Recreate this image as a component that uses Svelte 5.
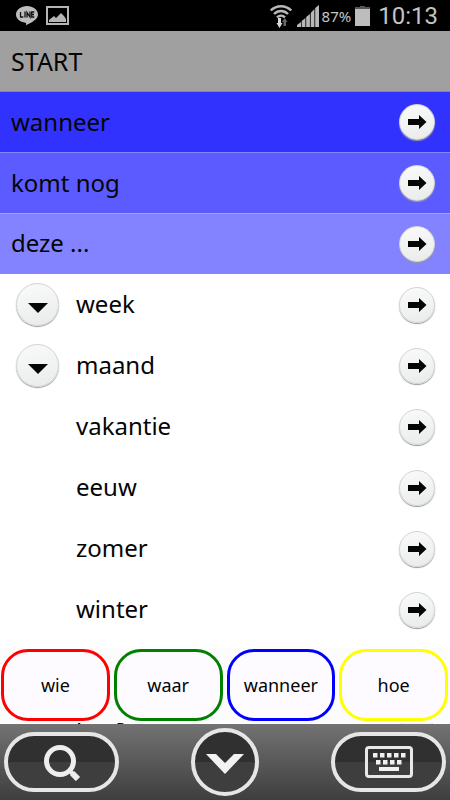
<script>
  const trail = [
    { text: 'wanneer', tone: 'deep' },
    { text: 'komt nog', tone: 'mid' },
    { text: 'deze ...', tone: 'light' }
  ];
  const words = [
    { text: 'week', more: true },
    { text: 'maand', more: true },
    { text: 'vakantie' },
    { text: 'eeuw' },
    { text: 'zomer' },
    { text: 'winter' },
    { text: 'lente' },
    { text: 'herfst' }
  ];
  const chips = [
    { text: 'wie', tone: 'red' },
    { text: 'waar', tone: 'green' },
    { text: 'wanneer', tone: 'blue' },
    { text: 'hoe', tone: 'yellow' }
  ];
  const topKeys = [8, 15, 22, 29, 36];
  const midKeys = [11, 18, 25, 32];
</script>

{#snippet go(text)}
  <button class="go" aria-label={`Kies ${text}`}>
    <svg width="20" height="16" viewBox="0 0 20 16"><path d="M1 5h11V1l7.500 7-7.500 7v-4H1z" fill="#050505" /></svg>
  </button>
{/snippet}

<div class="screen">
  <header class="status">
    <svg width="22" height="22" viewBox="0 0 22 22" aria-hidden="true">
      <path d="M11 1C5 1 0 4.700 0 9.500c0 4.300 4 7.500 9.500 8.200.9.200.6 1.400.5 2.600 5-2.300 12-5.900 12-10.800C22 4.700 17 1 11 1z" fill="#bdbdbd" />
      <path d="M4.500 7v5h2.800M9 6.500v6M11 12.500v-5l3 4.500V6.500M18.300 7h-2.600v5h2.600M15.700 9.500h2.300" fill="none" stroke="#111" stroke-width="1.300" />
    </svg>
    <svg class="photo" width="23" height="19" viewBox="0 0 23 19" aria-hidden="true">
      <rect x="1" y="1" width="21" height="17" fill="none" stroke="#b5b5b5" stroke-width="2" />
      <path d="M3 16v-2l5-4 2 2 5-5 3 3 2 3v3z" fill="#b5b5b5" />
    </svg>
    <span class="space"></span>
    <svg width="22" height="24" viewBox="0 0 22 24" aria-hidden="true">
      <g fill="none" stroke="#b8b8b8" stroke-width="2.400">
        <path d="M.8 6.500C6.500.8 15.500.8 21.200 6.500M4 10c4-4 10-4 14 0M7 13.300c2.400-2.300 5.600-2.300 8 0" />
      </g>
      <path d="M8 14h3v5h1.500l-3 5-3-5H8z" fill="#d8d8d8" />
      <path d="M13.500 22v-4H12l2.700-4 2.800 4H16v4z" fill="#666" />
    </svg>
    <svg class="signal" width="22" height="22" viewBox="0 0 22 22" aria-hidden="true">
      <path d="M0 22v-2l4-3v5zM4.700 22v-6l3.700-3v9zM9.200 22V12l3.700-3v13zM13.700 22V8l3.700-4v18zM18.200 22V3L22 0v22z" fill="#b8b8b8" />
    </svg>
    <span class="percent">87%</span>
    <svg class="battery" width="15" height="20" viewBox="0 0 15 20" aria-hidden="true">
      <path d="M5 0h5v1h5v2H0V1h5z" fill="#555" /><path d="M0 3h15v17H0z" fill="#bdbdbd" />
    </svg>
    <time class="clock">10:13</time>
  </header>

  <h1>START</h1>
  <nav>
    {#each trail as item}
      <div class="row crumb {item.tone}"><span class="word">{item.text}</span>{@render go(item.text)}</div>
    {/each}
  </nav>

  <main>
    <ul>
      {#each words as item}
        <li class="row">
          <span class="lead">
            {#if item.more}
              <button class="more" aria-label={`Open ${item.text}`}>
                <svg width="22" height="12" viewBox="0 0 22 12"><path d="M1 1h20L11 11z" fill="#050505" /></svg>
              </button>
            {/if}
          </span>
          <span class="word">{item.text}</span>
          {@render go(item.text)}
        </li>
      {/each}
    </ul>
  </main>

  <div class="chips">
    {#each chips as chip}
      <button class="chip {chip.tone}">{chip.text}</button>
    {/each}
  </div>

  <footer>
    <button class="tool pill" aria-label="Zoeken">
      <svg width="38" height="38" viewBox="0 0 38 38"><g fill="none" stroke="#eee"><circle cx="17" cy="18" r="13.500" stroke-width="5" /><path d="M26 27l4 4" stroke-width="4" /><path d="M29 30l6 6" stroke-width="6" /></g></svg>
    </button>
    <button class="tool round" aria-label="Omlaag">
      <svg class="down" width="38" height="20" viewBox="0 0 38 20"><path d="M0 0h10l9 9 9-9h10L19 20z" fill="#f2f2f2" /></svg>
    </button>
    <button class="tool pill" aria-label="Toetsenbord">
      <svg width="48" height="32" viewBox="0 0 48 32">
        <rect x="1.500" y="1.500" width="45" height="29" rx="2.500" fill="none" stroke="#e8e8e8" stroke-width="3" />
        <g fill="#f0f0f0">
          {#each topKeys as x}<rect {x} y="7" width="4.500" height="4.500" />{/each}
          {#each midKeys as x}<rect {x} y="14" width="4.500" height="4.500" />{/each}
          <rect x="14" y="21" width="20" height="4" />
        </g>
      </svg>
    </button>
  </footer>
</div>

<style>
  :global(body) { margin: 0; background: #fff; }
  .screen {
    display: flex;
    flex-direction: column;
    height: 100vh;
    overflow: hidden;
    color: #050505;
    font-family: "Noto Sans", "Open Sans", sans-serif;
    font-size: 24px;
  }
  svg { display: block; flex: none; }
  button { padding: 0; font: inherit; color: inherit; cursor: pointer; }
  .status {
    display: flex;
    align-items: center;
    flex: none;
    height: 31px;
    box-sizing: border-box;
    padding: 0 12px 0 16px;
    background: #000;
    color: #c4c4c4;
  }
  .photo { margin-left: 8px; }
  .space { flex: 1; }
  .signal { margin-left: 5px; }
  .percent { margin-left: 3px; font-size: 15px; }
  .battery { margin-left: 4px; }
  .clock { margin-left: 8px; font-family: Roboto, sans-serif; }
  h1 {
    flex: none;
    margin: 0;
    padding-left: 11px;
    background: #a0a0a0;
    border-bottom: 1px solid #8080c8;
    font-size: 25px;
    font-weight: 400;
    line-height: 60px;
  }
  nav { flex: none; }
  .row {
    display: flex;
    align-items: center;
    box-sizing: border-box;
    height: 61px;
    padding-right: 15px;
  }
  .crumb { padding-left: 11px; border-bottom: 1px solid #8585ff; }
  .deep { background: #3232ff; }
  .mid { background: #5b5bff; border-color: #a0a0ff; }
  .light { height: 60px; background: #8383ff; }
  .word { flex: 1; padding-bottom: 2px; }
  .lead { width: 60px; padding-left: 16px; }
  .go, .more {
    display: flex;
    align-items: center;
    justify-content: center;
    flex: none;
    box-sizing: border-box;
    width: 36px;
    height: 36px;
    border: 1px solid #d2d4d4;
    border-radius: 50%;
    background: linear-gradient(165deg, #fafafa, #e9ebeb);
    box-shadow: 0 1px 1px #999;
  }
  .more { width: 43px; height: 43px; }
  .more svg { margin-top: 6px; }
  main { flex: 1 1 0; min-height: 0; }
  ul { margin: 0; padding: 0; list-style: none; }
  .chips {
    position: relative;
    display: flex;
    flex: none;
    gap: 4px;
    padding: 1px 2px 2px 1px;
    margin-bottom: 1px;
    background: #fcfcfc;
  }
  .chip {
    flex: 1 1 0;
    height: 72px;
    border: 3px solid;
    border-radius: 27px;
    background: #fdfbff;
    font-size: 18px;
  }
  .red { border-color: #f00; }
  .green { border-color: #008000; }
  .blue { border-color: #00f; }
  .yellow { border-color: #ff0; }
  footer {
    position: relative;
    display: flex;
    flex: none;
    align-items: center;
    justify-content: space-between;
    height: 76px;
    box-sizing: border-box;
    padding: 0 4px;
    background: linear-gradient(#737373, #3e3e3e);
  }
  .tool {
    display: flex;
    align-items: center;
    justify-content: center;
    box-sizing: border-box;
    border: 4px solid #e6e6e6;
    background: linear-gradient(#303030 50%, #3e3e3e 50%);
  }
  .pill { width: 115px; height: 60px; border-radius: 30px; }
  .round { width: 68px; height: 68px; border-radius: 50%; }
  .down { margin-top: 4px; }
</style>
